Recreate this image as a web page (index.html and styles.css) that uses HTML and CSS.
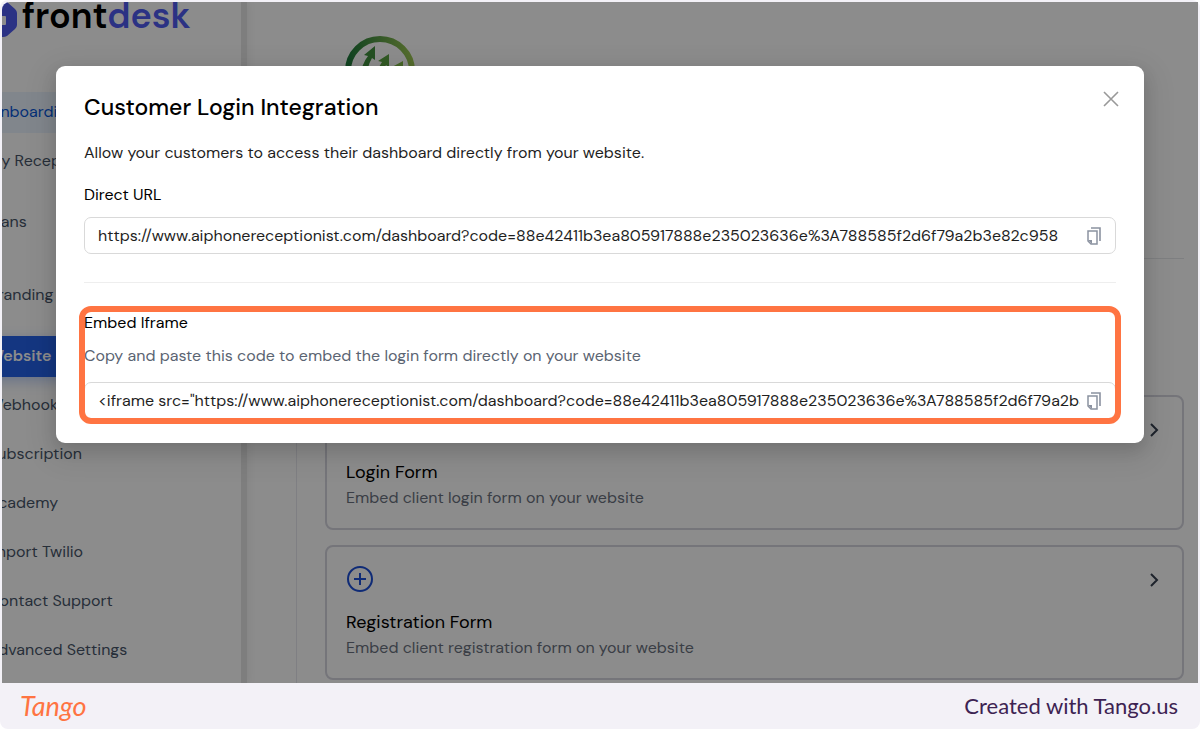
FILE: index.html
```
<!DOCTYPE html>
<html lang="en">
<head>
<meta charset="UTF-8" />
<meta name="viewport" content="width=device-width, initial-scale=1" />
<title>Customer Login Integration</title>
<link rel="stylesheet" href="styles.css">
</head>
<body>
  <div class="frame">
    <div class="screen">
      <div class="app">
        <aside class="sidebar">
          <a class="brand" href="#">
            <svg width="48" height="48" viewBox="0 0 48 48" aria-hidden="true">
              <path d="M14 8h20q2 0 4 2l8 7q2 2 2 4v12q0 2-2 4l-8 7q-2 1-4 1H14q-2 0-4-1l-8-7q-2-2-2-4V21q0-2 2-4l8-7q2-2 4-2z" fill="#4f5bf0"/>
              <rect x="14" y="24" width="23" height="9" rx="1" fill="#fff"/>
            </svg>
            <span>front<b>desk</b></span>
          </a>
          <nav class="menu">
            <a class="current" href="#">Onboarding</a>
            <a href="#">My Receptionist</a>
            <a class="group" href="#">Plans</a>
            <a class="section" href="#">Branding</a>
            <a class="group active" href="#">Website</a>
            <a href="#">Webhook</a>
            <a href="#">Subscription</a>
            <a href="#">Academy</a>
            <a href="#">Import Twilio</a>
            <a href="#">Contact Support</a>
            <a href="#">Advanced Settings</a>
          </nav>
        </aside>
        <main class="main">
          <header class="client">
            <svg width="70" height="70" viewBox="0 0 70 70" role="img" aria-label="Client logo">
              <defs>
                <linearGradient id="green" x1="0" y1="0" x2="1" y2="0">
                  <stop offset="0" stop-color="#1f7a3c"/>
                  <stop offset="1" stop-color="#9cc654"/>
                </linearGradient>
              </defs>
              <circle cx="35" cy="35" r="32" fill="none" stroke="url(#green)" stroke-width="6"/>
              <path d="M14 44Q17 27 23 20L19 19 30 10V24L27 22Q22 30 21 46z" fill="#42903f"/>
              <path d="M30 46Q32 33 37 26L33 25 44 18V32L41 29Q37 36 36 47z" fill="#5ba544"/>
              <path d="M44 48Q46 38 51 32L47 31 58 25V38L55 35Q51 42 50 50z" fill="#82bb49"/>
            </svg>
          </header>
          <section class="panel">
            <a class="card" href="#">
              <span class="card-top">
                <svg width="28" height="28" viewBox="0 0 28 28" aria-hidden="true"><circle cx="14" cy="14" r="12" fill="none" stroke="#1d4fd8" stroke-width="2"/><path d="M14 8v12M8 14h12" stroke="#1d4fd8" stroke-width="2"/></svg>
                <svg width="20" height="20" viewBox="0 0 20 20" aria-hidden="true"><path d="M8 5l6 6-6 6" fill="none" stroke="#374151" stroke-width="2"/></svg>
              </span>
              <span class="card-title">Login Form</span>
              <span class="card-text">Embed client login form on your website</span>
            </a>
            <a class="card" href="#">
              <span class="card-top">
                <svg width="28" height="28" viewBox="0 0 28 28" aria-hidden="true"><circle cx="14" cy="14" r="12" fill="none" stroke="#1d4fd8" stroke-width="2"/><path d="M14 8v12M8 14h12" stroke="#1d4fd8" stroke-width="2"/></svg>
                <svg width="20" height="20" viewBox="0 0 20 20" aria-hidden="true"><path d="M8 5l6 6-6 6" fill="none" stroke="#374151" stroke-width="2"/></svg>
              </span>
              <span class="card-title">Registration Form</span>
              <span class="card-text">Embed client registration form on your website</span>
            </a>
          </section>
        </main>
      </div>

      <div class="overlay">
        <div class="modal" role="dialog" aria-labelledby="modalTitle">
          <div class="modal-head">
            <h2 id="modalTitle">Customer Login Integration</h2>
            <button type="button" class="close" aria-label="Close">
              <svg width="22" height="22" viewBox="0 0 22 22"><path d="M4 4l14 14M18 4L4 18" stroke="#999" stroke-width="1.6"/></svg>
            </button>
          </div>
          <p class="intro">Allow your customers to access their dashboard directly from your website.</p>
          <label for="directUrl">Direct URL</label>
          <div class="field">
            <input type="text" id="directUrl" readonly value="https://www.aiphonereceptionist.com/dashboard?code=88e42411b3ea805917888e235023636e%3A788585f2d6f79a2b3e82c958" />
            <button type="button" aria-label="Copy direct URL">
              <svg width="16" height="18" viewBox="0 0 16 18"><path d="M5 1h9v13" fill="none" stroke="#8b92a0" stroke-width="1.6"/><path d="M2 4h9v13H5l-3-3z" fill="none" stroke="#8b92a0" stroke-width="1.5"/><path d="M2 13h4v4z" fill="#8b92a0"/></svg>
            </button>
          </div>
          <hr />
          <div class="embed">
            <label for="iframeCode">Embed Iframe</label>
            <p class="hint">Copy and paste this code to embed the login form directly on your website</p>
            <div class="field">
              <input type="text" id="iframeCode" readonly value="&lt;iframe src=&quot;https://www.aiphonereceptionist.com/dashboard?code=88e42411b3ea805917888e235023636e%3A788585f2d6f79a2b3e82c958" />
              <button type="button" aria-label="Copy iframe code">
                <svg width="16" height="18" viewBox="0 0 16 18"><path d="M5 1h9v13" fill="none" stroke="#8b92a0" stroke-width="1.6"/><path d="M2 4h9v13H5l-3-3z" fill="none" stroke="#8b92a0" stroke-width="1.5"/><path d="M2 13h4v4z" fill="#8b92a0"/></svg>
              </button>
            </div>
          </div>
        </div>
      </div>
    </div>

    <footer class="footer">
      <a class="tango" href="#">Tango</a>
      <span>Created with Tango.us</span>
    </footer>
  </div>
</body>
</html>
```
FILE: styles.css
```
* {
  box-sizing: border-box;
}
body {
  margin: 0;
  background: #fff;
  font-family: "DM Sans", Inter, sans-serif;
  font-size: 16px;
  line-height: 24px;
  color: #1f1f1f;
}
a {
  color: inherit;
  text-decoration: none;
}
svg {
  display: block;
  flex: none;
}
.frame {
  display: flex;
  flex-direction: column;
  height: 100vh;
  padding: 2px 2px 0;
  background: #f3f1f7;
  border-radius: 8px;
}
.screen {
  position: relative;
  flex: 1;
  min-height: 0;
  overflow: hidden;
  border-radius: 8px 0 0 0;
  background: #fff;
}

/* App behind the modal, scrolled a little to the right */
.app {
  display: flex;
  height: 100%;
  margin-left: -60px;
}
.sidebar {
  flex: none;
  width: 305px;
  border-right: 6px solid #e5e5e5;
  box-shadow: 2px 0 8px rgba(0, 0, 0, 0.06);
}
.brand {
  display: flex;
  align-items: center;
  gap: 5px;
  height: 48px;
  margin: -10px 0 52px 27px;
  font-size: 36px;
  font-weight: 600;
  color: #000;
}
.brand b {
  font-weight: 600;
  color: #4f5bf0;
}
.menu {
  display: flex;
  flex-direction: column;
  gap: 8px;
  color: #475569;
}
.menu a {
  height: 41px;
  padding: 8px 0 8px 46px;
}
.menu .group {
  margin-top: 12px;
}
.menu .section {
  margin-top: 24px;
}
.menu .current {
  background: #ebf4ff;
  color: #0958d9;
}
.menu .active {
  background: #2563eb;
  color: #fff;
  font-weight: 600;
  box-shadow: 0 4px 12px rgba(37, 99, 235, 0.3);
}
.main {
  flex: 1;
  min-width: 0;
  padding: 34px 14px 0 49px;
}
.client {
  padding: 0 49px 152px;
  border-bottom: 1px solid #e5e7eb;
}
.panel {
  display: flex;
  flex-direction: column;
  gap: 15px;
  padding: 136px 0 40px 28px;
  border-left: 1px solid #e8e8ee;
}
.card {
  display: flex;
  flex-direction: column;
  padding: 18px 19px;
  border: 2px solid #d5d5df;
  border-radius: 8px;
}
.card-top {
  display: flex;
  align-items: center;
  justify-content: space-between;
  margin-bottom: 16px;
}
.card-title {
  font-size: 18px;
  line-height: 26px;
  color: #000;
}
.card-text {
  line-height: 25px;
  color: #6b7280;
}

/* Modal */
.overlay {
  position: absolute;
  inset: 0;
  padding: 64px 54px;
  background: rgba(0, 0, 0, 0.45);
}
.modal {
  padding: 25px 28px 24px;
  border-radius: 9px;
  background: #fff;
  box-shadow: 0 6px 16px rgba(0, 0, 0, 0.12), 0 9px 28px 8px rgba(0, 0, 0, 0.08);
}
.modal-head {
  display: flex;
  align-items: flex-start;
  justify-content: space-between;
  margin-bottom: 18px;
}
h2 {
  margin: 0;
  font-size: 23px;
  line-height: 32px;
  font-weight: 500;
  color: #000;
}
button {
  padding: 0;
  border: 0;
  background: none;
  cursor: pointer;
}
.close {
  margin: -3px -6px 0 0;
}
.intro,
.hint {
  margin: 0;
}
.intro {
  margin-bottom: 18px;
}
.modal label {
  display: block;
  color: #000;
}
.field {
  display: flex;
  align-items: center;
  gap: 6px;
  height: 37px;
  margin-top: 10px;
  padding: 0 13px;
  border: 1px solid #d9d9d9;
  border-radius: 7px;
}
.field input {
  flex: 1;
  min-width: 0;
  padding: 0;
  border: 0;
  outline: 0;
  background: none;
  font: inherit;
  color: #1f1f1f;
}
hr {
  height: 1px;
  margin: 28px 0;
  border: 0;
  background: #eee;
}
.embed {
  position: relative;
}
.embed .hint {
  margin-top: 9px;
  color: #5b6472;
}
.embed .field {
  margin-top: 14px;
}
/* Highlight ring over the embed block */
.embed::after {
  content: "";
  position: absolute;
  inset: -5px;
  border: 6px solid #ff7442;
  border-radius: 12px;
  pointer-events: none;
}

.footer {
  display: flex;
  align-items: center;
  justify-content: space-between;
  height: 46px;
  padding: 0 20px 0 18px;
  font-family: Lato, sans-serif;
  font-size: 22px;
  color: #3d2352;
}
.tango {
  font-size: 27px;
  font-style: italic;
  color: #ff7442;
}
```
